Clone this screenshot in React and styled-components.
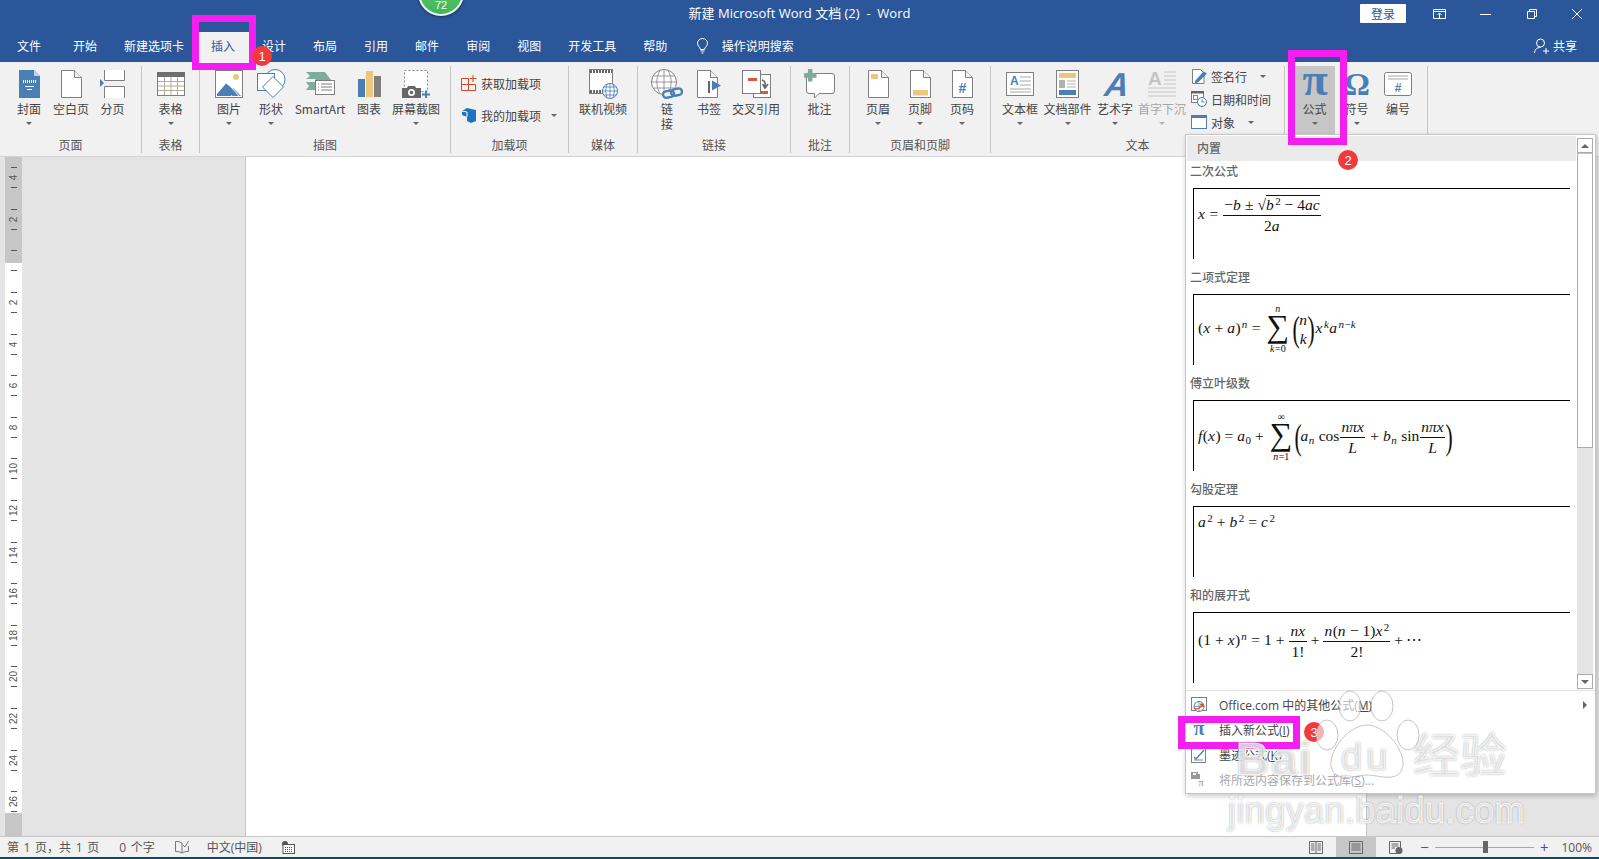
import styled, { createGlobalStyle } from "styled-components";

const BLUE = "#4a7fb5";
const GREY = "#7f7f7f";
const YELLOW = "#ecc77c";

const GlobalStyle = createGlobalStyle`
  html, body {
    margin: 0;
    padding: 0;
    height: 100%;
    overflow: hidden;
    background: #e4e4e4;
  }
  * {
    box-sizing: border-box;
  }
`;

const Window = styled.div`
  position: relative;
  width: 100%;
  height: 100vh;
  display: flex;
  flex-direction: column;
  overflow: hidden;
  font-family: "Noto Sans CJK SC", "Noto Sans", sans-serif;
  font-size: 12px;
  color: #444;
`;

const TitleBar = styled.div`
  height: 32px;
  flex: none;
  background: #2b579a;
  color: #fff;
  display: grid;
  grid-template-columns: 1fr auto 1fr;
  align-items: center;
  padding-bottom: 8px;
`;

const Title = styled.div`
  font-family: "Open Sans", "Noto Sans CJK SC", sans-serif;
  font-size: 13px;
  white-space: pre;
`;

const WindowControls = styled.div`
  display: flex;
  align-items: center;
  justify-content: flex-end;
  padding-top: 3px;
  padding-right: 17px;
`;

const LoginButton = styled.div`
  width: 46px;
  height: 19px;
  background: #fff;
  color: #2b579a;
  border-radius: 1px;
  display: flex;
  align-items: center;
  justify-content: center;
  margin-right: 27px;
`;

const WinIcon = styled.svg`
  margin-right: ${(p) => p.$gap}px;
  flex: none;
`;

const TabBar = styled.div`
  height: 30px;
  flex: none;
  background: #2b579a;
  display: flex;
  align-items: stretch;
  padding-left: 3.5px;
  color: #fff;
`;

const Tab = styled.div`
  padding: 0 13.5px 3px;
  margin-right: ${(p) => (p.$first ? 5 : 0)}px;
  display: flex;
  align-items: center;
  white-space: nowrap;
  background: ${(p) => (p.$active ? "#f1f1f1" : "transparent")};
  color: ${(p) => (p.$active ? "#2b579a" : "#fff")};
`;

const TellMe = styled.div`
  margin-left: 16px;
  display: flex;
  align-items: center;
  gap: 14px;
  padding-bottom: 3px;
`;

const Share = styled.div`
  margin-left: auto;
  padding: 0 22px 3px 0;
  display: flex;
  align-items: center;
  gap: 4px;
`;

const Ribbon = styled.div`
  height: 95px;
  flex: none;
  background: #f1f1f1;
  border-bottom: 1px solid #d2d2d2;
  display: flex;
  padding: 4px 0 3px;
`;

const Group = styled.div`
  width: ${(p) => p.$w}px;
  flex: none;
  display: flex;
  flex-direction: column;
  border-right: 1px solid #c6c6c6;
`;

const GroupBody = styled.div`
  height: 71px;
  display: flex;
  padding-left: ${(p) => p.$pad || 0}px;
`;

const GroupLabel = styled.div`
  height: 15px;
  line-height: 16px;
  text-align: center;
  color: #555;
`;

const BigButton = styled.div`
  width: ${(p) => p.$w}px;
  height: 68px;
  flex: none;
  display: flex;
  flex-direction: column;
  align-items: center;
  padding-top: 2px;
  background: ${(p) => (p.$active ? "#c6c6c6" : "transparent")};
  color: ${(p) => (p.$muted ? "#a6a6a6" : "#444")};
`;

const IconSlot = styled.div`
  height: 30px;
  padding-top: 1px;
  display: flex;
  align-items: center;
  justify-content: center;
  flex: none;
`;

const ButtonLabel = styled.div`
  margin-top: 3px;
  line-height: ${(p) => (p.$two ? 15 : 16)}px;
  text-align: center;
  white-space: nowrap;
`;

const Caret = styled.span`
  display: block;
  flex: none;
  width: 0;
  height: 0;
  margin-top: ${(p) => (p.$inline ? 0 : 5)}px;
  margin-left: ${(p) => p.$left || 0}px;
  border-left: 3px solid transparent;
  border-right: 3px solid transparent;
  border-top: 3.5px solid ${(p) => (p.$muted ? "#b5b5b5" : "#666")};
`;

const SmallColumn = styled.div`
  display: flex;
  flex-direction: column;
  gap: ${(p) => p.$gap}px;
  margin-top: ${(p) => p.$top}px;
  margin-left: ${(p) => p.$left || 0}px;
`;

const SmallRow = styled.div`
  height: 22px;
  display: flex;
  align-items: center;
  white-space: nowrap;
  gap: 4px;
`;

const SmallIcon = styled.div`
  width: 16px;
  height: 16px;
  flex: none;
  display: flex;
  align-items: center;
  justify-content: center;
`;

const Workspace = styled.div`
  flex: 1;
  min-height: 0;
  display: flex;
  padding-left: 5px;
  background: #e4e4e4;
`;

const Ruler = styled.div`
  width: 17px;
  flex: none;
  overflow: hidden;
  background: linear-gradient(#c6c6c6 0 106px, #fff 106px 656px, #c6c6c6 656px);
`;

const RulerCell = styled.div`
  height: 41.6px;
  display: flex;
  flex-direction: column;
  align-items: center;
  justify-content: center;
`;

const Tick = styled.div`
  width: 6px;
  height: 1px;
  background: #555;
  flex: none;
`;

const RulerNumber = styled.div`
  height: 19px;
  flex: none;
  display: flex;
  align-items: center;
  justify-content: center;
  font-family: "Liberation Sans", sans-serif;
  font-size: 10px;
  color: #555;
  transform: rotate(-90deg);
`;

const Page = styled.div`
  margin-left: 223px;
  width: 1122px;
  flex: none;
  background: #fff;
  border-left: 1px solid #c6c6c6;
  border-right: 1px solid #c6c6c6;
`;

const StatusBar = styled.div`
  height: 21px;
  flex: none;
  background: #f1f1f1;
  border-top: 1px solid #c6c6c6;
  display: flex;
  align-items: center;
  padding-left: 7px;
  color: #555;
  font-family: "Open Sans", "Noto Sans CJK SC", sans-serif;
  word-spacing: 1.5px;
  white-space: pre;
`;

const StatusItem = styled.div`
  margin-right: ${(p) => p.$gap || 0}px;
  margin-left: ${(p) => p.$left || 0}px;
  display: flex;
  align-items: center;
  flex: none;
`;

const StatusRight = styled.div`
  margin-left: auto;
  height: 100%;
  display: flex;
  align-items: center;
  padding-right: 7px;
`;

const ViewButton = styled.div`
  width: 40px;
  height: 100%;
  display: flex;
  align-items: center;
  justify-content: center;
  background: ${(p) => (p.$active ? "#c6c6c6" : "transparent")};
`;

const Zoom = styled.div`
  display: flex;
  align-items: center;
  gap: 6px;
  margin-left: 4px;
  font-size: 15px;
`;

const SliderTrack = styled.div`
  position: relative;
  width: 99px;
  height: 1px;
  background: #a6a6a6;
`;

const SliderThumb = styled.div`
  position: absolute;
  left: 48px;
  top: -6px;
  width: 5px;
  height: 12px;
  background: #666;
`;

const Sliver = styled.div`
  height: 2px;
  flex: none;
  background: #0f4a68;
`;

const Dropdown = styled.div`
  position: absolute;
  left: 1185px;
  top: 134px;
  width: 411px;
  height: 660px;
  background: #fff;
  border: 1px solid #c6c6c6;
  box-shadow: 1px 2px 5px rgba(0, 0, 0, 0.22);
  display: flex;
  flex-direction: column;
`;

const GalleryWrap = styled.div`
  height: 556px;
  flex: none;
  display: flex;
  padding-top: 1px;
  border-bottom: 1px solid #e2e2e2;
`;

const GalleryMain = styled.div`
  flex: 1;
  min-width: 0;
  overflow: hidden;
  margin-left: 1px;
`;

const GalleryHeader = styled.div`
  height: 25px;
  background: #ebebeb;
  color: #666;
  font-weight: 500;
  line-height: 23px;
  padding-left: 10px;
`;

const GalleryItem = styled.div`
  & + & {
    margin-top: 8px;
  }
`;

const ItemLabel = styled.div`
  height: 20px;
  line-height: 20px;
  margin: 0 0 7px 3px;
  color: #666;
  font-weight: 500;
`;

const FormulaBox = styled.div`
  width: 377px;
  height: 71px;
  margin-left: 6px;
  border-left: 1px solid #000;
  border-top: 1px solid #000;
  padding: ${(p) => p.$top}px 0 0 4px;
`;

const Formula = styled.div`
  display: inline-block;
  font-family: "Liberation Serif", "DejaVu Serif", serif;
  font-size: 15.5px;
  line-height: 1;
  color: #111;
  white-space: pre;
`;

const Var = styled.i`
  font-style: italic;
  padding-right: 0.5px;
`;

const Sup = styled.sup`
  font-size: 11px;
  line-height: 0;
  vertical-align: 5px;
  margin-left: 1px;
`;

const Sub = styled.sub`
  font-size: 11px;
  line-height: 0;
  vertical-align: -3px;
`;

const Op = styled.span`
  margin: 0 ${(p) => (p.$m === undefined ? 4 : p.$m)}px;
`;

const Fraction = styled.span`
  display: inline-flex;
  flex-direction: column;
  align-items: center;
  vertical-align: middle;
  margin: 0 1px;
`;

const Numerator = styled.span`
  display: block;
  padding: 0 1px 2px;
  border-bottom: 1px solid #111;
  width: 100%;
  text-align: center;
`;

const Denominator = styled.span`
  padding-top: 2px;
`;

const Radical = styled.span`
  border-top: 1px solid #111;
`;

const Sum = styled.span`
  display: inline-flex;
  flex-direction: column;
  align-items: center;
  vertical-align: middle;
  margin: 0 2px;
`;

const SumSign = styled.span`
  font-size: 32px;
  line-height: 30px;
  transform: translateY(-3px);
`;

const Limit = styled.span`
  font-size: 10px;
  line-height: 10px;
`;

const Binomial = styled.span`
  display: inline-flex;
  align-items: center;
  vertical-align: middle;
  margin: 0 2px;
`;

const BigParen = styled.span`
  display: inline-block;
  vertical-align: middle;
  margin: 0 -3px;
  font-size: ${(p) => p.$size}px;
  font-weight: 300;
  line-height: 1;
  transform: scaleX(0.6);
`;

const BinomialStack = styled.span`
  display: inline-flex;
  flex-direction: column;
  align-items: center;
  gap: 3px;
`;

const Scrollbar = styled.div`
  width: 16px;
  flex: none;
  margin: 2px 2px 1px 1px;
  background: #e4e4e4;
  display: flex;
  flex-direction: column;
`;

const ScrollArrow = styled.div`
  height: 15px;
  flex: none;
  background: #fff;
  border: 1px solid #ababab;
  display: flex;
  align-items: center;
  justify-content: center;
  margin-top: ${(p) => (p.$down ? "auto" : 0)};

  &::before {
    content: "";
    border-left: 4px solid transparent;
    border-right: 4px solid transparent;
    ${(p) => (p.$down ? "border-top" : "border-bottom")}: 4px solid #666;
  }
`;

const ScrollThumb = styled.div`
  height: 295px;
  flex: none;
  background: #fff;
  border: 1px solid #ababab;
  border-top-color: #c6c6c6;
`;

const Menu = styled.div`
  display: flex;
  flex-direction: column;
  padding-top: 1px;
`;

const MenuItem = styled.div`
  height: 25px;
  display: flex;
  align-items: center;
  padding: 0 8px 0 5px;
  gap: 12px;
  font-family: "Open Sans", "Noto Sans CJK SC", sans-serif;
  color: ${(p) => (p.$muted ? "#a8a8a8" : "#444")};
  white-space: nowrap;
`;

const MenuIcon = styled.div`
  width: 16px;
  height: 16px;
  flex: none;
  display: flex;
  align-items: center;
  justify-content: center;
`;

const MenuArrow = styled.span`
  margin-left: auto;
  border-top: 4px solid transparent;
  border-bottom: 4px solid transparent;
  border-left: 4px solid #666;
`;

const Highlight = styled.div`
  position: absolute;
  left: ${(p) => p.$x}px;
  top: ${(p) => p.$y}px;
  width: ${(p) => p.$w}px;
  height: ${(p) => p.$h}px;
  border: 7px solid #f51ef0;
  pointer-events: none;
`;

const StepBadge = styled.div`
  position: absolute;
  left: ${(p) => p.$x - 10}px;
  top: ${(p) => p.$y - 10}px;
  width: 20px;
  height: 20px;
  border-radius: 50%;
  background: #f23a3c;
  color: #fff;
  font-family: "Liberation Sans", sans-serif;
  font-size: 13px;
  display: flex;
  align-items: center;
  justify-content: center;
`;

const ScoreBubble = styled.div`
  position: absolute;
  left: 418px;
  top: -30px;
  width: 46px;
  height: 46px;
  border-radius: 50%;
  border: 2px solid #eef5ef;
  background: linear-gradient(#6fd070, #3db65a);
  box-shadow: 0 1px 3px rgba(0, 0, 0, 0.45);
  color: #fff;
  font-family: "Liberation Sans", sans-serif;
  font-size: 11px;
  display: flex;
  align-items: flex-end;
  justify-content: center;
  padding-bottom: 3px;
`;

const Watermark = styled.div`
  position: absolute;
  left: 1225px;
  top: 690px;
  width: 300px;
  height: 145px;
  pointer-events: none;
`;

const MarkText = styled.div`
  position: absolute;
  left: ${(p) => p.$x}px;
  top: ${(p) => p.$y}px;
  font-family: ${(p) => (p.$cjk ? '"Noto Sans CJK SC"' : '"Liberation Sans"')}, sans-serif;
  font-size: ${(p) => p.$size}px;
  font-weight: ${(p) => (p.$bold ? 700 : 400)};
  line-height: 1;
  letter-spacing: ${(p) => p.$track || 0}px;
  color: rgba(255, 255, 255, 0.8);
  -webkit-text-stroke: 1px rgba(255, 255, 255, 0.8);
  text-shadow: 0 0 2px rgba(0, 0, 0, 0.6);
  white-space: nowrap;
`;

const PawSvg = styled.svg`
  position: absolute;
  left: 90px;
  top: 0;
`;

function Pg({ w = 21, h = 28, children }) {
  return (
    <svg width={w} height={h} viewBox={`0 0 ${w} ${h}`}>
      <path d={`M.5.5H${w - 7.5}L${w - 0.5} 7.5V${h - 0.5}H.5Z`} fill="#fff" stroke={GREY} />
      <path d={`M${w - 7.5} .5V7.5H${w - 0.5}`} fill="#f1f1f1" stroke={GREY} />
      {children}
    </svg>
  );
}

const icons = {
  cover: (
    <svg width="21" height="28" viewBox="0 0 21 28">
      <path d="M0 0H15L21 6V28H0Z" fill={BLUE} />
      <path d="M15 0L21 6H15Z" fill="#bcd2e8" />
      <path d="M4 11.5H17" stroke="#fff" strokeWidth="3" strokeDasharray="1 1" />
      <path d="M6 16.5H15M8 19.5H13" stroke="#fff" />
    </svg>
  ),
  blank: <Pg />,
  pageBreak: (
    <svg width="25" height="28" viewBox="0 0 25 28">
      <path d="M4.5 0V10.5H24.5V0" fill="#fff" stroke={GREY} />
      <path d="M4.5 28V16.5H24.5V28" fill="#fff" stroke={GREY} />
      <path d="M0 9L4 13L0 17Z" fill={BLUE} />
    </svg>
  ),
  table: (
    <svg width="28" height="24" viewBox="0 0 28 24">
      <rect x=".5" y=".5" width="27" height="23" fill="#fff" stroke={GREY} />
      <rect width="28" height="5" fill="#6f6f6f" />
      <path d="M1 9.5H27M1 14H27M1 18.5H27M7.5 5V23M14 5V23M20.5 5V23" stroke="#b5a99a" />
    </svg>
  ),
  picture: (
    <svg width="28" height="28" viewBox="0 0 28 28">
      <rect x=".5" y=".5" width="27" height="27" fill="#fff" stroke={GREY} />
      <circle cx="21" cy="7" r="3" fill={YELLOW} />
      <path d="M2 26V24L11 13.5L18 19L16 26Z" fill={BLUE} />
      <path d="M17.5 26L13 22L18 18L26 26Z" fill={BLUE} />
      <path d="M16 17L24 26" stroke="#fff" />
    </svg>
  ),
  shapes: (
    <svg width="29" height="29" viewBox="0 0 29 29">
      <circle cx="18" cy="10.5" r="10" fill="#fff" stroke={BLUE} />
      <rect x=".5" y="4.5" width="17" height="17" fill="#fff" stroke={BLUE} />
      <path d="M16 7.5L26.5 18L16 28.5L5.5 18Z" fill="#fff" stroke={BLUE} />
    </svg>
  ),
  smartArt: (
    <svg width="29" height="23" viewBox="0 0 29 23">
      <path d="M0 0H19L25 8H9.5V7H0L4 4Z" fill="#7eab9b" />
      <path d="M0 10H10V18H0L3 14Z" fill="#7eab9b" />
      <rect x="9.5" y="8.5" width="19" height="14" fill="#fff" stroke={GREY} />
      <path d="M12 12H13M12 15H13M12 18H13M15 12H26M15 15H26M15 18H26" stroke={GREY} />
    </svg>
  ),
  chart: (
    <svg width="23" height="26" viewBox="0 0 23 26">
      <rect y="8" width="7" height="18" fill={BLUE} />
      <rect x="8" width="7" height="26" fill={YELLOW} />
      <rect x="16" y="5" width="7" height="21" fill={GREY} />
    </svg>
  ),
  screenshot: (
    <svg width="28" height="28" viewBox="0 0 28 28">
      <rect x="2.5" y=".5" width="23" height="21" fill="#fff" stroke="#8a8a8a" strokeDasharray="2 2" />
      <path d="M0 18H5L6 16H13L14 18H19V28H0Z" fill="#666" />
      <circle cx="9.5" cy="22.5" r="3.5" fill="#fff" />
      <circle cx="9.5" cy="22.5" r="1.8" fill="#666" />
      <path d="M20 24.5H28M24 20.5V28" stroke={BLUE} strokeWidth="2" />
    </svg>
  ),
  video: (
    <svg width="29" height="30" viewBox="0 0 29 30">
      <rect x=".5" y=".5" width="23" height="24" fill="#fff" stroke={GREY} />
      <path d="M1 2.5H23M1 22.5H23" stroke="#666" strokeWidth="3" strokeDasharray="2 1" />
      <circle cx="21" cy="22" r="7.5" fill="#fff" stroke={BLUE} />
      <path d="M14 22H28M21 15V29M15 18H27M15 26H27M18 15Q15 22 18 29M24 15Q27 22 24 29" stroke={BLUE} fill="none" strokeWidth=".8" />
    </svg>
  ),
  link: (
    <svg width="32" height="30" viewBox="0 0 32 30">
      <circle cx="13" cy="13" r="12.5" fill="#fff" stroke={GREY} />
      <path d="M1 13H25M13 1V25M3 7H23M3 19H23M8.5 2Q3 13 8.5 24M17.5 2Q23 13 17.5 24" stroke={GREY} fill="none" strokeWidth=".8" />
      <rect x="12" y="22" width="11" height="6.5" rx="3.2" fill="#f1f1f1" stroke={BLUE} strokeWidth="2.4" transform="rotate(-12 17 25)" />
      <rect x="20" y="20" width="11" height="6.5" rx="3.2" fill="none" stroke={BLUE} strokeWidth="2.4" transform="rotate(-12 25 23)" />
    </svg>
  ),
  bookmark: (
    <svg width="24" height="28" viewBox="0 0 24 28">
      <path d="M.5.5H13.5L20.5 7.5V27.5H.5Z" fill="#fff" stroke={GREY} />
      <path d="M13.5.5V7.5H20.5" fill="#f1f1f1" stroke={GREY} />
      <rect x="11" y="11" width="2" height="12" fill="#666" />
      <path d="M15 10.5L24 15.5L15 20.5Z" fill={BLUE} />
    </svg>
  ),
  crossRef: (
    <svg width="29" height="28" viewBox="0 0 29 28">
      <rect x="11.5" y="4.5" width="17" height="23" fill="#fff" stroke={GREY} />
      <rect x=".5" y=".5" width="18" height="23" fill="#fff" stroke={GREY} />
      <rect x="6" y="8" width="9" height="3" fill="#d9583a" />
      <rect x="19" y="21" width="7" height="3" fill="#d9583a" />
      <path d="M20 10Q24 11 23 17M20.5 14L23 18L26 14" fill="none" stroke="#666" strokeWidth="1.6" />
    </svg>
  ),
  comment: (
    <svg width="31" height="30" viewBox="0 0 31 30">
      <path d="M2.5 4.5H28Q30.5 4.5 30.5 7V22Q30.5 24.5 28 24.5H15L10.5 29V24.5H5Q2.5 24.5 2.5 22Z" fill="#fff" stroke={GREY} />
      <path d="M0 6.5H12.5M6.2 0V12.5" stroke="#7eab9b" strokeWidth="4.5" />
    </svg>
  ),
  header: (
    <Pg>
      <rect x="3" y="4" width="7" height="5" fill={YELLOW} />
    </Pg>
  ),
  footer: (
    <Pg>
      <rect x="3" y="20" width="15" height="5.5" fill={YELLOW} />
    </Pg>
  ),
  pageNumber: (
    <Pg>
      <text x="10.5" y="23" fontSize="14" fontWeight="700" fontFamily="Liberation Sans" fill={BLUE} textAnchor="middle">#</text>
    </Pg>
  ),
  textBox: (
    <svg width="28" height="24" viewBox="0 0 28 24">
      <rect x=".5" y=".5" width="27" height="23" fill="#fff" stroke={GREY} />
      <text x="4" y="13" fontSize="12" fontWeight="700" fontFamily="Liberation Sans" fill={BLUE}>A</text>
      <path d="M14 5H25M14 9H25M14 13H25M4 17H25M4 20H25" stroke="#a6a6a6" />
    </svg>
  ),
  docParts: (
    <svg width="23" height="28" viewBox="0 0 23 28">
      <rect x=".5" y=".5" width="22" height="27" fill="#fff" stroke={GREY} />
      <rect x="3" y="3" width="17" height="5" fill={YELLOW} />
      <rect x="3" y="10" width="6" height="8" fill="#b0b0b0" />
      <path d="M11 11H20M11 14H20M11 17H20" stroke="#b0b0b0" />
      <rect x="3" y="20" width="17" height="5" fill={BLUE} />
    </svg>
  ),
  wordArt: (
    <svg width="26" height="26" viewBox="0 0 26 26" overflow="visible">
      <text x="17" y="25" fontSize="33" fontStyle="italic" fontWeight="700" fontFamily="Liberation Sans" fill={BLUE} textAnchor="middle" transform="skewX(-8)">A</text>
    </svg>
  ),
  dropCap: (
    <svg width="28" height="28" viewBox="0 0 28 28">
      <text x="0" y="15" fontSize="19" fontWeight="700" fontFamily="Liberation Sans" fill="#c4c4c4">A</text>
      <path d="M16 2H28M16 6H28M16 10H28M16 14H28M0 18H28M0 22H28M0 26H28" stroke="#c4c4c4" />
    </svg>
  ),
  pi: (
    <svg width="30" height="28" viewBox="0 0 30 28" overflow="visible">
      <text x="15" y="25" fontSize="46" fontWeight="700" fontFamily="Liberation Serif" fill={BLUE} textAnchor="middle">π</text>
    </svg>
  ),
  omega: (
    <svg width="26" height="28" viewBox="0 0 26 28" overflow="visible">
      <text x="13" y="25" fontSize="32" fontWeight="700" fontFamily="Liberation Serif" fill={BLUE} textAnchor="middle">Ω</text>
    </svg>
  ),
  numbering: (
    <svg width="28" height="24" viewBox="0 0 28 24">
      <rect x=".5" y=".5" width="27" height="23" rx="2" fill="#fff" stroke={GREY} />
      <path d="M4 4H24M4 7H24" stroke="#a6a6a6" />
      <text x="14" y="20" fontSize="12" fontWeight="700" fontFamily="Liberation Sans" fill={BLUE} textAnchor="middle">#</text>
    </svg>
  ),
};

const small = {
  getAddin: (
    <svg width="16" height="16" viewBox="0 0 16 16">
      <path d="M.5 3.5H7.5V15.5H.5ZM.5 9.5H14.5V15.5H7.5M12 0V7M8.5 3.5H15.5" fill="none" stroke="#d0492a" />
    </svg>
  ),
  myAddin: (
    <svg width="15" height="16" viewBox="0 0 15 16">
      <path d="M5 1L14 3V14L9 16L5 14V10L0 8V4Z" fill="#1e73be" />
      <path d="M5 5V10M5 5L0 4" stroke="#fff" />
    </svg>
  ),
  signature: (
    <svg width="15" height="15" viewBox="0 0 15 15">
      <path d="M.5.5H8.5L12 4V14.5H.5Z" fill="#fff" stroke={GREY} />
      <path d="M3 12L11.5 2.5L15 4.5L6 13.5L3 14Z" fill={BLUE} />
    </svg>
  ),
  date: (
    <svg width="16" height="16" viewBox="0 0 16 16">
      <rect x=".5" y=".5" width="12" height="11" fill="#fff" stroke={GREY} />
      <rect width="13" height="2.5" fill="#666" />
      <rect x="2.5" y="4.5" width="4" height="4" fill="none" stroke="#e0701f" />
      <circle cx="11" cy="11" r="4.5" fill="#fff" stroke={BLUE} />
      <path d="M11 8.5V11H13" stroke={BLUE} fill="none" />
    </svg>
  ),
  object: (
    <svg width="16" height="14" viewBox="0 0 16 14">
      <rect x=".5" y=".5" width="15" height="13" fill="#fff" stroke={BLUE} />
      <rect width="16" height="3" fill={BLUE} />
    </svg>
  ),
  officeCom: (
    <svg width="16" height="16" viewBox="0 0 16 16">
      <rect x=".5" y=".5" width="15" height="13" fill="#fff" stroke={GREY} />
      <circle cx="8" cy="9.5" r="5" fill="#fff" stroke={BLUE} />
      <path d="M3 9.5H13M8 4.5V14.5" stroke={BLUE} strokeWidth=".7" />
      <path d="M3 11Q8 14 12 7M12 7L9 7.5M12 7L12.5 10" fill="none" stroke="#e0501f" strokeWidth="1.3" />
    </svg>
  ),
  menuPi: (
    <svg width="14" height="16" viewBox="0 0 14 16" overflow="visible">
      <text x="7" y="13" fontSize="20" fontWeight="700" fontFamily="Liberation Serif" fill={BLUE} textAnchor="middle">π</text>
    </svg>
  ),
  ink: (
    <svg width="16" height="16" viewBox="0 0 16 16">
      <rect x=".5" y="1.5" width="14" height="14" fill="#fff" stroke={GREY} />
      <path d="M3 10L5 12L13 3" fill="none" stroke={BLUE} strokeWidth="1.3" />
      <path d="M3 13H12" stroke={GREY} />
    </svg>
  ),
  save: (
    <svg width="16" height="16" viewBox="0 0 16 16">
      <path d="M0 0H7V2H9V7H0Z" fill="#9a9a9a" />
      <rect x="2" y="1" width="3" height="2" fill="#fff" />
      <text x="10" y="14" fontSize="11" fontFamily="Liberation Serif" fill="#9a9a9a" textAnchor="middle">π</text>
    </svg>
  ),
};

const groups = [
  {
    label: "页面", w: 142, pad: 8, buttons: [
      { icon: "cover", text: "封面", w: 42, caret: true },
      { icon: "blank", text: "空白页", w: 42 },
      { icon: "pageBreak", text: "分页", w: 41 },
    ],
  },
  { label: "表格", w: 58, buttons: [{ icon: "table", text: "表格", w: 57, caret: true }] },
  {
    label: "插图", w: 251, pad: 8, buttons: [
      { icon: "picture", text: "图片", w: 42, caret: true },
      { icon: "shapes", text: "形状", w: 42, caret: true },
      { icon: "smartArt", text: "SmartArt", w: 56 },
      { icon: "chart", text: "图表", w: 42 },
      { icon: "screenshot", text: "屏幕截图", w: 52, caret: true },
    ],
  },
  {
    label: "加载项", w: 118, small: { top: 6, gap: 10, left: 10 }, rows: [
      { icon: "getAddin", text: "获取加载项" },
      { icon: "myAddin", text: "我的加载项", caret: 6 },
    ],
  },
  { label: "媒体", w: 69, buttons: [{ icon: "video", text: "联机视频", w: 68 }] },
  {
    label: "链接", w: 153, pad: 10, buttons: [
      { icon: "link", text: ["链", "接"], w: 38 },
      { icon: "bookmark", text: "书签", w: 46 },
      { icon: "crossRef", text: "交叉引用", w: 48 },
    ],
  },
  { label: "批注", w: 59, buttons: [{ icon: "comment", text: "批注", w: 57 }] },
  {
    label: "页眉和页脚", w: 141, pad: 7, buttons: [
      { icon: "header", text: "页眉", w: 42, caret: true },
      { icon: "footer", text: "页脚", w: 42, caret: true },
      { icon: "pageNumber", text: "页码", w: 42, caret: true },
    ],
  },
  {
    label: "文本", w: 294, pad: 5, buttons: [
      { icon: "textBox", text: "文本框", w: 48, caret: true },
      { icon: "docParts", text: "文档部件", w: 47, caret: true },
      { icon: "wordArt", text: "艺术字", w: 48, caret: true },
      { icon: "dropCap", text: "首字下沉", w: 46, caret: true, muted: true },
    ],
    small: { top: -1, gap: 1, left: 6 }, rows: [
      { icon: "signature", text: "签名行", caret: 9 },
      { icon: "date", text: "日期和时间" },
      { icon: "object", text: "对象", caret: 9 },
    ],
  },
  {
    label: "", w: 143, pad: 9, buttons: [
      { icon: "pi", text: "公式", w: 41, caret: true, active: true },
      { icon: "omega", text: "符号", w: 43, caret: true },
      { icon: "numbering", text: "编号", w: 40 },
    ],
  },
];

const tabs = ["开始", "新建选项卡", "插入", "设计", "布局", "引用", "邮件", "审阅", "视图", "开发工具", "帮助"];

const rulerMarks = [4, 2, "", ...Array.from({ length: 13 }, (_, i) => (i + 1) * 2)];

function Big({ button }) {
  const two = Array.isArray(button.text);
  return (
    <BigButton $w={button.w} $active={button.active} $muted={button.muted}>
      <IconSlot>{icons[button.icon]}</IconSlot>
      <ButtonLabel $two={two}>
        {two ? button.text.map((t) => <div key={t}>{t}</div>) : button.text}
      </ButtonLabel>
      {button.caret && <Caret $muted={button.muted} />}
    </BigButton>
  );
}

function RibbonGroup({ group }) {
  return (
    <Group $w={group.w}>
      <GroupBody $pad={group.pad}>
        {group.buttons && group.buttons.map((b) => <Big key={b.icon} button={b} />)}
        {group.rows && (
          <SmallColumn $top={group.small.top} $gap={group.small.gap} $left={group.small.left}>
            {group.rows.map((r) => (
              <SmallRow key={r.icon}>
                <SmallIcon>{small[r.icon]}</SmallIcon>
                {r.text}
                {r.caret && <Caret $inline $left={r.caret} />}
              </SmallRow>
            ))}
          </SmallColumn>
        )}
      </GroupBody>
      <GroupLabel>{group.label}</GroupLabel>
    </Group>
  );
}

function Quadratic() {
  return (
    <Formula>
      <Var>x</Var><Op>=</Op>
      <Fraction>
        <Numerator>
          −<Var>b</Var> ± √<Radical><Var>b</Var><Sup>2</Sup> − 4<Var>ac</Var></Radical>
        </Numerator>
        <Denominator>2<Var>a</Var></Denominator>
      </Fraction>
    </Formula>
  );
}

function Binom() {
  return (
    <Formula>
      (<Var>x</Var><Op>+</Op><Var>a</Var>)<Sup><Var>n</Var></Sup><Op>=</Op>
      <Sum>
        <Limit><Var>n</Var></Limit>
        <SumSign>∑</SumSign>
        <Limit><Var>k</Var>=0</Limit>
      </Sum>
      <Binomial>
        <BigParen $size={36}>(</BigParen>
        <BinomialStack><Var>n</Var><Var>k</Var></BinomialStack>
        <BigParen $size={36}>)</BigParen>
      </Binomial>
      <Var>x</Var><Sup><Var>k</Var></Sup><Var>a</Var><Sup><Var>n</Var>−<Var>k</Var></Sup>
    </Formula>
  );
}

function Fourier() {
  return (
    <Formula>
      <Var>f</Var>(<Var>x</Var>)<Op>=</Op><Var>a</Var><Sub>0</Sub><Op>+</Op>
      <Sum>
        <Limit>∞</Limit>
        <SumSign>∑</SumSign>
        <Limit><Var>n</Var>=1</Limit>
      </Sum>
      <BigParen $size={36}>(</BigParen>
      <Var>a</Var><Sub><Var>n</Var></Sub> cos
      <Fraction>
        <Numerator><Var>nπx</Var></Numerator>
        <Denominator><Var>L</Var></Denominator>
      </Fraction>
      <Op>+</Op><Var>b</Var><Sub><Var>n</Var></Sub> sin
      <Fraction>
        <Numerator><Var>nπx</Var></Numerator>
        <Denominator><Var>L</Var></Denominator>
      </Fraction>
      <BigParen $size={36}>)</BigParen>
    </Formula>
  );
}

function Pythagoras() {
  return (
    <Formula>
      <Var>a</Var><Sup>2</Sup><Op>+</Op><Var>b</Var><Sup>2</Sup><Op>=</Op><Var>c</Var><Sup>2</Sup>
    </Formula>
  );
}

function Expansion() {
  return (
    <Formula>
      (1<Op>+</Op><Var>x</Var>)<Sup><Var>n</Var></Sup><Op>=</Op>1<Op>+</Op>
      <Fraction>
        <Numerator><Var>nx</Var></Numerator>
        <Denominator>1!</Denominator>
      </Fraction>
      <Op $m={3}>+</Op>
      <Fraction>
        <Numerator><Var>n</Var>(<Var>n</Var> − 1)<Var>x</Var><Sup>2</Sup></Numerator>
        <Denominator>2!</Denominator>
      </Fraction>
      <Op $m={3}>+</Op>⋯
    </Formula>
  );
}

const gallery = [
  { title: "二次公式", top: 8, body: <Quadratic /> },
  { title: "二项式定理", top: 9, body: <Binom /> },
  { title: "傅立叶级数", top: 11, body: <Fourier /> },
  { title: "勾股定理", top: 6, body: <Pythagoras /> },
  { title: "和的展开式", top: 10, body: <Expansion /> },
];

function App() {
  return (
    <Window>
      <GlobalStyle />
      <TitleBar>
        <div />
        <Title>新建 Microsoft Word 文档 (2)  -  Word</Title>
        <WindowControls>
          <LoginButton>登录</LoginButton>
          <WinIcon $gap={34} width="13" height="10" viewBox="0 0 13 10">
            <path d="M.5.5H12.5V9.5H.5ZM.5 2.5H12.5M6.5 9V4M4.5 6L6.5 4L8.5 6" fill="none" stroke="#fff" />
          </WinIcon>
          <WinIcon $gap={36} width="11" height="10" viewBox="0 0 11 10">
            <path d="M0 5.5H11" stroke="#fff" />
          </WinIcon>
          <WinIcon $gap={35} width="10" height="10" viewBox="0 0 10 10">
            <path d="M.5 2.5H7.5V9.5H.5ZM2.5 2.5V.5H9.5V7.5H7.5" fill="none" stroke="#fff" />
          </WinIcon>
          <WinIcon $gap={0} width="10" height="10" viewBox="0 0 10 10">
            <path d="M0 0L10 10M10 0L0 10" stroke="#fff" />
          </WinIcon>
        </WindowControls>
      </TitleBar>

      <TabBar>
        <Tab $first>文件</Tab>
        {tabs.map((t) => (
          <Tab key={t} $active={t === "插入"}>{t}</Tab>
        ))}
        <TellMe>
          <svg width="11" height="16" viewBox="0 0 11 16">
            <path d="M5.5.5C2.5.5.5 2.7.5 5.3C.5 7.8 3 9 3.5 11.5H7.5C8 9 10.5 7.8 10.5 5.3C10.5 2.7 8.5.5 5.5.5ZM3.5 13H7.5M4.5 15H6.5" fill="none" stroke="#fff" />
          </svg>
          操作说明搜索
        </TellMe>
        <Share>
          <svg width="15" height="16" viewBox="0 0 15 16">
            <circle cx="6.5" cy="5" r="4" fill="none" stroke="#fff" />
            <path d="M.5 15C1 11 3 9.5 6.5 9.5M9 13H15M12 10V16" fill="none" stroke="#fff" />
          </svg>
          共享
        </Share>
      </TabBar>

      <Ribbon>
        {groups.map((g) => (
          <RibbonGroup key={g.w + g.label} group={g} />
        ))}
      </Ribbon>

      <Workspace>
        <Ruler>
          {rulerMarks.map((m, i) => (
            <RulerCell key={i}>
              <Tick />
              <RulerNumber>{m}</RulerNumber>
              <Tick />
            </RulerCell>
          ))}
        </Ruler>
        <Page />
      </Workspace>

      <StatusBar>
        <StatusItem $gap={20}>第 1 页，共 1 页</StatusItem>
        <StatusItem $gap={20}>0 个字</StatusItem>
        <StatusItem $gap={18}>
          <svg width="14" height="14" viewBox="0 0 14 14">
            <path d="M7 3Q4 1 .5 1.5V11.5Q4 11 7 13Q10 11 13.5 11.5V6M7 3V13" fill="none" stroke="#777" />
            <path d="M8 5L10 7L13.5 1" fill="none" stroke="#777" />
          </svg>
        </StatusItem>
        <StatusItem $gap={20}>中文(中国)</StatusItem>
        <StatusItem>
          <svg width="13" height="13" viewBox="0 0 13 13">
            <circle cx="3" cy="3" r="3" fill="#555" />
            <rect x="1" y="3.5" width="11.5" height="9" fill="#fff" stroke="#555" />
            <path d="M3 6.5H11M3 8.5H11M3 10.5H11" stroke="#555" strokeDasharray="1 1" />
          </svg>
        </StatusItem>
        <StatusRight>
          <ViewButton>
            <svg width="14" height="13" viewBox="0 0 14 13">
              <path d="M.5.5H13.5V12.5H.5ZM7 .5V12.5M2 3H5.5M2 5H5.5M2 7H5.5M2 9H5.5M8.5 3H12M8.5 5H12M8.5 7H12M8.5 9H12" fill="none" stroke="#666" />
            </svg>
          </ViewButton>
          <ViewButton $active>
            <svg width="14" height="13" viewBox="0 0 14 13">
              <path d="M.5.5H13.5V12.5H.5ZM2.5 3H11.5M2.5 5H11.5M2.5 7H11.5M2.5 9H11.5" fill="none" stroke="#666" />
            </svg>
          </ViewButton>
          <ViewButton>
            <svg width="14" height="13" viewBox="0 0 14 13">
              <path d="M.5.5H11.5V12.5H.5ZM2.5 3H9.5M2.5 5H9.5M2.5 7H6" fill="none" stroke="#666" />
              <circle cx="10" cy="9.5" r="3.5" fill="#666" />
            </svg>
          </ViewButton>
          <Zoom>
            <span>−</span>
            <SliderTrack>
              <SliderThumb />
            </SliderTrack>
            <span>+</span>
          </Zoom>
          <StatusItem $left={13}>100%</StatusItem>
        </StatusRight>
      </StatusBar>
      <Sliver />

      <ScoreBubble>72</ScoreBubble>

      <Dropdown>
        <GalleryWrap>
          <GalleryMain>
            <GalleryHeader>内置</GalleryHeader>
            {gallery.map((g) => (
              <GalleryItem key={g.title}>
                <ItemLabel>{g.title}</ItemLabel>
                <FormulaBox $top={g.top}>{g.body}</FormulaBox>
              </GalleryItem>
            ))}
          </GalleryMain>
          <Scrollbar>
            <ScrollArrow />
            <ScrollThumb />
            <ScrollArrow $down />
          </Scrollbar>
        </GalleryWrap>
        <Menu>
          <MenuItem>
            <MenuIcon>{small.officeCom}</MenuIcon>
            <span>Office.com 中的其他公式(<u>M</u>)</span>
            <MenuArrow />
          </MenuItem>
          <MenuItem>
            <MenuIcon>{small.menuPi}</MenuIcon>
            <span>插入新公式(<u>I</u>)</span>
          </MenuItem>
          <MenuItem>
            <MenuIcon>{small.ink}</MenuIcon>
            <span>墨迹公式(<u>K</u>)</span>
          </MenuItem>
          <MenuItem $muted>
            <MenuIcon>{small.save}</MenuIcon>
            <span>将所选内容保存到公式库(<u>S</u>)...</span>
          </MenuItem>
        </Menu>
      </Dropdown>

      <Highlight $x={192} $y={15} $w={64} $h={55} />
      <Highlight $x={1288} $y={50} $w={59} $h={95} />
      <Highlight $x={1178} $y={716} $w={122} $h={33} />
      <StepBadge $x={262} $y={56}>1</StepBadge>
      <StepBadge $x={1348} $y={160}>2</StepBadge>
      <StepBadge $x={1314} $y={732}>3</StepBadge>

      <Watermark>
        <PawSvg width="110" height="100" viewBox="0 0 110 100">
          <g fill="rgba(255,255,255,0.6)" stroke="rgba(110,110,110,0.4)">
            <ellipse cx="12" cy="45" rx="11" ry="15" />
            <ellipse cx="35" cy="16" rx="11" ry="15" />
            <ellipse cx="67" cy="16" rx="11" ry="15" />
            <ellipse cx="93" cy="45" rx="11" ry="15" />
            <path d="M52 35C70 35 90 60 88 76C84 94 64 85 52 85C40 85 20 94 16 76C14 60 34 35 52 35Z" />
          </g>
        </PawSvg>
        <MarkText $x={11} $y={46} $size={46} $track={2} $bold>Bai</MarkText>
        <MarkText $x={116} $y={48} $size={38} $track={4}>du</MarkText>
        <MarkText $x={188} $y={38} $size={47} $cjk>经验</MarkText>
        <MarkText $x={3} $y={103} $size={36} $track={0.4}>jingyan.baidu.com</MarkText>
      </Watermark>
    </Window>
  );
}

export default App;
